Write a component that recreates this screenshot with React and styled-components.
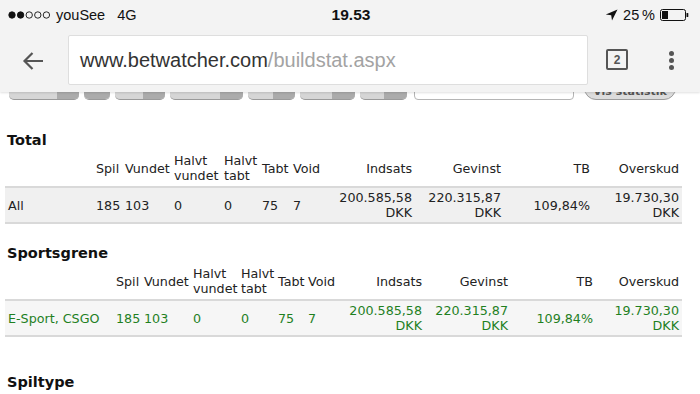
import React from "react";
import styled, { createGlobalStyle } from "styled-components";

const Global = createGlobalStyle`
  html, body { margin: 0; padding: 0; background: #fff; }
  #root { width: 700px; height: 394px; overflow: hidden; }
`;

const Screen = styled.div`
  width: 700px;
  height: 394px;
  overflow: hidden;
  display: flex;
  flex-direction: column;
  background: #fff;
`;

const Chrome = styled.div`
  position: relative;
  z-index: 2;
  height: 92px;
  flex: none;
  background: #f3f3f3;
  box-shadow: 0 1px 2px rgba(0, 0, 0, 0.12);
  display: flex;
  flex-direction: column;
  font-family: "Liberation Sans", Arial, sans-serif;
`;

const StatusBar = styled.div`
  height: 29px;
  padding-top: 1px;
  box-sizing: border-box;
  display: grid;
  grid-template-columns: 1fr auto 1fr;
  align-items: center;
  padding-left: 8px;
  padding-right: 8px;
  font-size: 14.5px;
  color: #111;
`;

const StatusLeft = styled.div`
  display: flex;
  align-items: center;
  gap: 5px;
`;

const Carrier = styled.span`
  margin-right: 7px;
`;

const Time = styled.div`
  font-weight: 700;
  font-size: 15.5px;
  margin-left: 2px;
`;

const StatusRight = styled.div`
  display: flex;
  align-items: center;
  justify-content: flex-end;
  gap: 5px;
  margin-right: 2px;
`;

const Toolbar = styled.div`
  height: 63px;
  box-sizing: border-box;
  display: flex;
  align-items: flex-start;
  padding-top: 6px;
`;

const BackButton = styled.div`
  width: 68px;
  height: 50px;
  display: flex;
  align-items: center;
  justify-content: center;
  padding-right: 2px;
  padding-top: 1px;
  box-sizing: border-box;
`;

const UrlField = styled.div`
  width: 520px;
  height: 50px;
  box-sizing: border-box;
  background: #fff;
  border: 1px solid #dedede;
  border-radius: 2px;
  display: flex;
  align-items: center;
  padding-left: 11px;
  padding-top: 1px;
  font-size: 20px;
  white-space: nowrap;
`;

const Host = styled.span`
  color: #333;
`;

const Path = styled.span`
  color: #a3a3a3;
`;

const TabsButton = styled.div`
  margin-left: 18px;
  margin-top: 14px;
  width: 22px;
  height: 21px;
  box-sizing: border-box;
  border: 2px solid #555;
  border-radius: 2px;
  display: flex;
  align-items: center;
  justify-content: center;
  font-size: 12px;
  font-weight: 700;
  color: #555;
`;

const MenuDots = styled.div`
  margin-left: 41px;
  margin-top: 16px;
  display: flex;
  flex-direction: column;
  gap: 2px;
`;

const Dot = styled.span`
  width: 5px;
  height: 5px;
  border-radius: 50%;
  background: #555;
`;

const Page = styled.div`
  flex: 1;
  overflow: hidden;
  padding-left: 5px;
  font-family: "DejaVu Sans", Verdana, sans-serif;
  font-size: 12.7px;
  line-height: 15px;
  color: #222;
`;

const Controls = styled.div`
  margin-top: -16px;
  margin-left: 4px;
  display: flex;
  align-items: flex-start;
  gap: 5px;
  height: 24px;
`;

const SelectBox = styled.div`
  width: ${(p) => p.$w}px;
  height: 24px;
  box-sizing: border-box;
  border-radius: 5px;
  overflow: hidden;
  display: flex;
  border-bottom: 1px solid #9a9a9a;
  background: #d6d6d6;
`;

const SelectKnob = styled.div`
  margin-left: auto;
  width: ${(p) => p.$w}px;
  background: #ababab;
`;

const TextInput = styled.div`
  width: 160px;
  height: 24px;
  box-sizing: border-box;
  border: 1px solid #b5b5b5;
  border-radius: 4px;
  background: #fff;
  margin-left: 2px;
  margin-right: 5px;
`;

const SubmitButton = styled.div`
  width: 92px;
  height: 24px;
  box-sizing: border-box;
  border-radius: 12px;
  border: 1px solid #9d9d9d;
  background: #dcdcdc;
  color: #555;
  font-size: 11px;
  font-weight: 700;
  display: flex;
  align-items: flex-end;
  justify-content: center;
  padding-bottom: 1px;
  line-height: 12px;
`;

const Heading = styled.h2`
  margin: ${(p) => p.$mt}px 0 1px;
  padding-left: 2px;
  font-size: 14.5px;
  line-height: 17px;
  font-weight: 700;
  color: #111;
`;

const Table = styled.table`
  width: 677px;
  table-layout: fixed;
  border-collapse: collapse;
  color: ${(p) => (p.$green ? "#1f801f" : "#222")};
`;

const Col = styled.col`
  width: ${(p) => p.$w}px;
`;

const HeadCell = styled.th`
  font-weight: 400;
  padding: 3px 3px;
  text-align: ${(p) => (p.$right ? "right" : "left")};
  vertical-align: middle;
  color: #222;
  white-space: nowrap;
`;

const DataRow = styled.tr`
  background: ${(p) => p.$bg};
  border-top: 2px solid #d9d9d9;
  border-bottom: 2px solid #d9d9d9;
`;

const Cell = styled.td`
  padding: 2px 3px;
  text-align: ${(p) => (p.$right ? "right" : "left")};
  vertical-align: middle;
  white-space: nowrap;
`;

const Line = styled.span`
  display: block;
`;

const columns = [
  { label: "" },
  { label: "Spil" },
  { label: "Vundet" },
  { label: ["Halvt", "vundet"] },
  { label: ["Halvt", "tabt"] },
  { label: "Tabt" },
  { label: "Void" },
  { label: "Indsats", right: true },
  { label: "Gevinst", right: true },
  { label: "TB", right: true },
  { label: "Overskud", right: true },
];

const Money = ({ v }) => (
  <>
    <Line>{v}</Line>
    <Line>DKK</Line>
  </>
);

function StatTable({ widths, row, green, bg }) {
  return (
    <Table $green={green}>
      <colgroup>
        {widths.map((w, i) => (
          <Col key={i} $w={w} />
        ))}
      </colgroup>
      <thead>
        <tr>
          {columns.map((c, i) => (
            <HeadCell key={i} $right={c.right}>
              {Array.isArray(c.label)
                ? c.label.map((l) => <Line key={l}>{l}</Line>)
                : c.label}
            </HeadCell>
          ))}
        </tr>
      </thead>
      <tbody>
        <DataRow $bg={bg}>
          <Cell>{row.name}</Cell>
          <Cell>185</Cell>
          <Cell>103</Cell>
          <Cell>0</Cell>
          <Cell>0</Cell>
          <Cell>75</Cell>
          <Cell>7</Cell>
          <Cell $right>
            <Money v="200.585,58" />
          </Cell>
          <Cell $right>
            <Money v="220.315,87" />
          </Cell>
          <Cell $right>109,84%</Cell>
          <Cell $right>
            <Money v="19.730,30" />
          </Cell>
        </DataRow>
      </tbody>
    </Table>
  );
}

const SignalDots = () => (
  <svg width="43" height="8" viewBox="0 0 43 8">
    {[0, 1, 2, 3, 4].map((i) => (
      <circle
        key={i}
        cx={4 + i * 8.6}
        cy="4"
        r="3.2"
        fill={i < 2 ? "#111" : "none"}
        stroke="#111"
        strokeWidth="0.9"
      />
    ))}
  </svg>
);

const LocationArrow = () => (
  <svg width="13" height="12" viewBox="0 0 13 12">
    <path d="M12.5 0.5 L0.8 5.6 L6.2 6.2 L7 11.5 Z" fill="#111" />
  </svg>
);

const Battery = () => (
  <svg width="30" height="12" viewBox="0 0 30 12">
    <rect x="0.5" y="0.5" width="25" height="11" rx="2" fill="none" stroke="#111" strokeWidth="1" />
    <rect x="2" y="2" width="6" height="8" fill="#111" />
    <rect x="26.5" y="4" width="1.8" height="4" rx="0.6" fill="#111" />
  </svg>
);

const BackArrow = () => (
  <svg width="22" height="20" viewBox="0 0 22 20">
    <path d="M21 10 H2.5 M10.5 2 L2.5 10 L10.5 18" fill="none" stroke="#555" strokeWidth="2.2" />
  </svg>
);

const selects = [
  { w: 70, k: 22 },
  { w: 26, k: 26 },
  { w: 50, k: 22 },
  { w: 73, k: 23 },
  { w: 47, k: 22 },
  { w: 55, k: 23 },
  { w: 47, k: 23 },
];

export default function App() {
  return (
    <Screen>
      <Global />
      <Chrome>
        <StatusBar>
          <StatusLeft>
            <SignalDots />
            <Carrier>youSee</Carrier>
            <span>4G</span>
          </StatusLeft>
          <Time>19.53</Time>
          <StatusRight>
            <LocationArrow />
            <span>25&#8201;%</span>
            <Battery />
          </StatusRight>
        </StatusBar>
        <Toolbar>
          <BackButton>
            <BackArrow />
          </BackButton>
          <UrlField>
            <Host>www.betwatcher.com</Host>
            <Path>/buildstat.aspx</Path>
          </UrlField>
          <TabsButton>2</TabsButton>
          <MenuDots>
            <Dot />
            <Dot />
            <Dot />
          </MenuDots>
        </Toolbar>
      </Chrome>
      <Page>
        <Controls>
          {selects.map((s, i) => (
            <SelectBox key={i} $w={s.w}>
              <SelectKnob $w={s.k} />
            </SelectBox>
          ))}
          <TextInput />
          <SubmitButton>Vis statistik</SubmitButton>
        </Controls>
        <Heading $mt={32}>Total</Heading>
        <StatTable
          widths={[88, 29, 49, 50, 38, 31, 36, 89, 89, 89, 89]}
          row={{ name: "All" }}
          bg="#f0f0f0"
        />
        <Heading $mt={21}>Sportsgrene</Heading>
        <StatTable
          widths={[108, 28, 49, 48, 37, 30, 35, 85, 86, 85, 86]}
          row={{ name: "E-Sport, CSGO" }}
          bg="#f6f6f6"
          green
        />
        <Heading $mt={37}>Spiltype</Heading>
      </Page>
    </Screen>
  );
}
